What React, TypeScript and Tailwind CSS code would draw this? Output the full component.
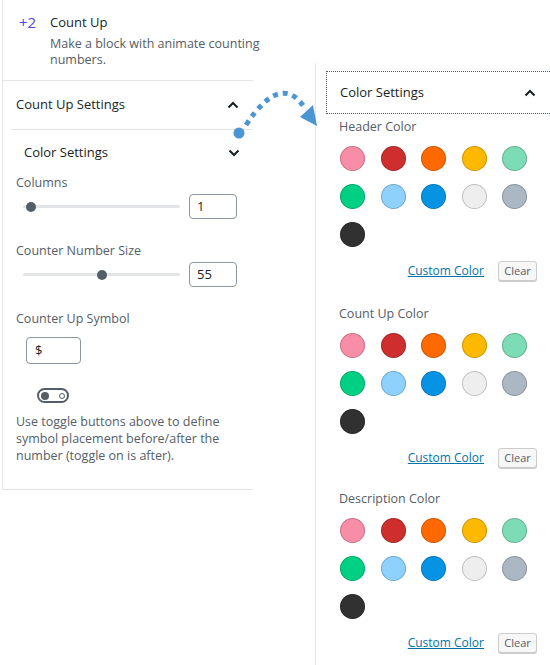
import React from 'react'

const font = { fontFamily: '"Open Sans", "Noto Sans", sans-serif' }

const swatches = [
  '#f78da7',
  '#cf2e2e',
  '#ff6900',
  '#fcb900',
  '#7bdcb5',
  '#00d084',
  '#8ed1fc',
  '#0693e3',
  '#eeeeee',
  '#abb8c3',
  '#313131',
]

function Chevron({ up }: { up?: boolean }) {
  return (
    <svg width="12" height="8" viewBox="0 0 12 8" className="shrink-0">
      <path
        d={up ? 'M1.5 6.5 L6 2 L10.5 6.5' : 'M1.5 1.5 L6 6 L10.5 1.5'}
        fill="none"
        stroke="#191e23"
        strokeWidth="2"
      />
    </svg>
  )
}

function RangeRow({ value, thumb }: { value: string; thumb: number }) {
  return (
    <div className="flex h-[25px] items-center">
      <div className="relative ml-[7px] h-[3px] w-[157px] rounded-full bg-[#e2e4e7]">
        <span
          className="absolute top-1/2 h-[10px] w-[10px] -translate-y-1/2 rounded-full bg-[#555d66]"
          style={{ left: thumb - 5 }}
        />
      </div>
      <div className="ml-[9px] flex h-[25px] w-[48px] items-center rounded-[4px] border border-[#8d96a0] px-[7px] text-[13px] text-[#191e23]">
        {value}
      </div>
    </div>
  )
}

function Palette({ label, top }: { label: string; top: string }) {
  return (
    <div className={top}>
      <p className="h-[16px] text-[12.5px] leading-[16px] text-[#555d66]">{label}</p>
      <div className="ml-[1px] mt-[11px] grid w-[190px] grid-cols-5 gap-[13px]">
        {swatches.map(color => (
          <span
            key={color}
            className="h-[25px] w-[25px] rounded-full shadow-[inset_0_0_0_1px_rgba(0,0,0,0.2)]"
            style={{ backgroundColor: color }}
          />
        ))}
      </div>
      <div className="mt-[14px] flex items-center justify-end pr-[13px]">
        <span className="text-[12px] text-[#0073aa] underline">Custom Color</span>
        <button
          type="button"
          className="ml-[14px] flex h-[20px] w-[39px] items-center justify-center rounded-[3px] border border-[#cccccc] bg-[#f7f7f7] text-[11px] text-[#555d66] shadow-[0_1px_0_#cccccc]"
        >
          Clear
        </button>
      </div>
    </div>
  )
}

export default function App() {
  return (
    <div className="relative flex h-[665px] w-[550px] overflow-hidden bg-white text-[#191e23]" style={font}>
      {/* block inspector */}
      <div className="ml-[2px] w-[251px] shrink-0 self-start border-b border-l border-[#e2e4e7]">
        <div className="flex pb-[12px] pl-[16px] pt-[13px]">
          <span className="w-[31px] shrink-0 text-[15px] leading-[18px] text-[#4f46d8]">+2</span>
          <div className="w-[200px] shrink-0">
            <p className="text-[13px] leading-[18px] text-[#191e23]">Count Up</p>
            <p className="mt-[5px] w-[218px] text-[12.5px] leading-[16px] text-[#555d66]">
              Make a block with animate counting numbers.
            </p>
          </div>
        </div>

        <div className="border-t border-[#e2e4e7]">
          <div className="flex h-[48px] items-center justify-between pl-[13px] pr-[14px]">
            <span className="text-[13px] font-medium">Count Up Settings</span>
            <Chevron up />
          </div>

          <div className="ml-[8px] border-t border-[#e2e4e7]">
            <div className="flex h-[45px] items-center justify-between pl-[13px] pr-[13px]">
              <span className="text-[13px] font-medium">Color Settings</span>
              <Chevron />
            </div>
          </div>

          <div className="pl-[13px] pt-0">
            <p className="h-[16px] text-[12.5px] leading-[16px] text-[#555d66]">Columns</p>
            <div className="mt-[3px]">
              <RangeRow value="1" thumb={8} />
            </div>

            <p className="mt-[24px] h-[16px] text-[12.5px] leading-[16px] text-[#555d66]">Counter Number Size</p>
            <div className="mt-[3px]">
              <RangeRow value="55" thumb={79} />
            </div>

            <p className="mt-[24px] h-[16px] text-[12.5px] leading-[16px] text-[#555d66]">Counter Up Symbol</p>
            <div className="ml-[10px] mt-[10px] flex h-[27px] w-[55px] items-center rounded-[4px] border border-[#8d96a0] px-[8px] text-[13px]">
              $
            </div>

            <div className="ml-[21px] mt-[24px] flex h-[15px] w-[32px] items-center justify-between rounded-full border-2 border-[#555d66] px-[2px]">
              <span className="h-[8px] w-[8px] rounded-full bg-[#555d66]" />
              <span className="h-[6px] w-[6px] rounded-full border-[1.5px] border-[#555d66]" />
            </div>

            <p className="mt-[10px] w-[220px] pb-[25px] text-[12.5px] leading-[17px] text-[#555d66]">
              Use toggle buttons above to define symbol placement before/after the number (toggle on is after).
            </p>
          </div>
        </div>
      </div>

      {/* color settings panel */}
      <div className="ml-[62px] mt-[63px] flex-1 border-l border-[#e2e4e7]">
        <div className="ml-[10px] mt-[8px] flex h-[43px] items-center justify-between border border-r-0 border-dotted border-[#555d66] pl-[13px] pr-[14px]">
          <span className="text-[13px] font-medium">Color Settings</span>
          <Chevron up />
        </div>
        <div className="pl-[23px]">
          <Palette label="Header Color" top="mt-[5px]" />
          <Palette label="Count Up Color" top="mt-[25px]" />
          <Palette label="Description Color" top="mt-[23px]" />
        </div>
      </div>

      {/* pointer arrow */}
      <svg className="pointer-events-none absolute left-0 top-0" width="550" height="665">
        <circle cx="239" cy="133" r="5.5" fill="#4b95d5" />
        <path
          d="M246 125 Q282 70 306 110"
          fill="none"
          stroke="#4b95d5"
          strokeWidth="5"
          strokeDasharray="5 5"
        />
        <polygon points="317,126 300,117 313,105" fill="#4b95d5" />
      </svg>
    </div>
  )
}
